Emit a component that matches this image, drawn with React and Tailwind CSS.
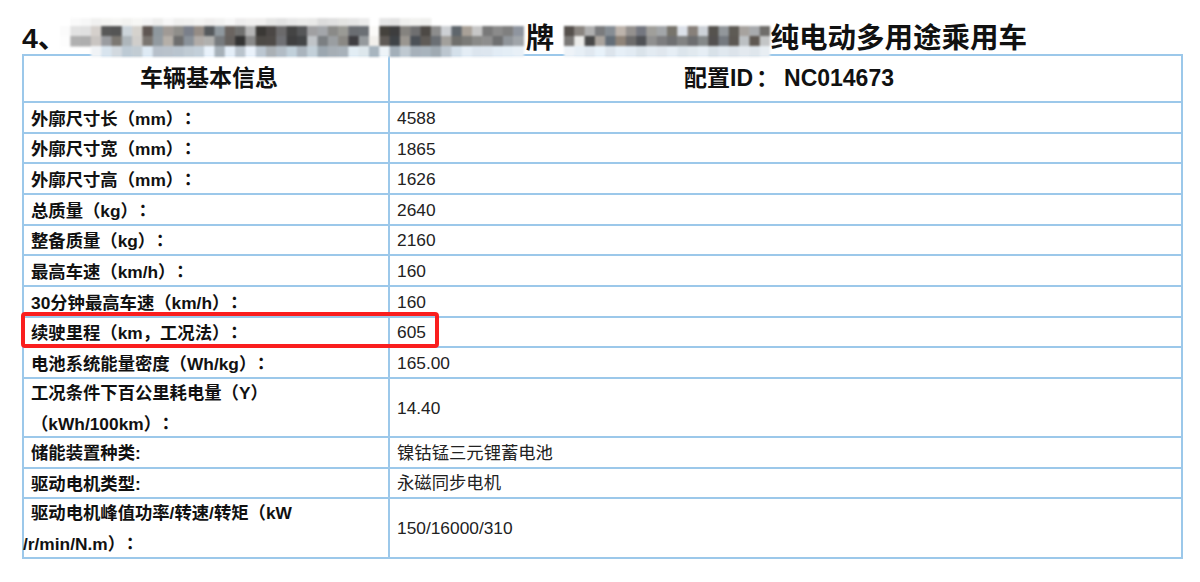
const mosaics = {
  a: {
    cell: 10.3,
    rows: [
      ["#ffffff","#fafafa","#f7f7f7","#f1f1f0","#f4f4f2","#f7f7f5","#f3f3f1","#f7f7f5","#f4f4f4","#eeeeed","#f7f7f7","#f0f0ef","#f1f1f0","#f4f4f3","#f0efee","#f2f2f1","#f7f7f7","#eeeded","#f1f0ef","#f0efee","#e6e6e5","#e2e2e2","#e8e8e8","#ebebea","#e9e9e8","#dcdcdc","#e0e0e0","#e4e4e2","#e6e6e6","#ececec","#ffffff","#e6e6e6","#e3e3e3","#f0f0ee","#f2f2f0","#f0f0ee","#ffffff","#ffffff","#ffffff","#ffffff","#ffffff","#ffffff","#ffffff","#ffffff","#ffffff"],
      ["#fbfbfb","#e2e2e2","#e0e0e0","#d5d0cc","#585858","#555555","#ccd4da","#d5d2cd","#5f5652","#8f989e","#a09a95","#8f8e8a","#7a7f8a","#958c85","#55595c","#8f989e","#6a6460","#70706f","#b5b5b5","#3a3835","#4b4745","#6b6a6b","#444444","#555658","#a0a0a2","#a3a6aa","#8a8a88","#9a9a95","#6a6d72","#6b7075","#fbfaf8","#45423d","#3d3d3e","#85837f","#6f6f70","#4d4945","#8d8d8d","#cdd0d4","#5f666c","#a9a198","#c7c7c7","#797979","#8b8b8b","#7f7f7f","#8f959f"],
      ["#fdfdfd","#b0b0b0","#aeaeae","#c9c5c2","#9a9ca0","#7c7872","#aeb6bb","#d0cecb","#7a7570","#929aa0","#b5afa8","#6e6e6e","#8a929a","#b0aba7","#b0b0ae","#777b7e","#66625f","#343434","#8a8a8a","#4d4a46","#4f4b48","#6f7074","#3f3f40","#434547","#c0c4c8","#7b7f82","#9a9ea1","#8a8884","#3f3e42","#959a9d","#f2f0ec","#5f5a56","#3f4347","#9a9690","#4c5157","#5f5b57","#6b6f74","#a2a09c","#6f6f6c","#7b7b78","#8a8a88","#8e8e8e","#6f7071","#90959a","#a0a5aa"],
      ["#ffffff","#ffffff","#ffffff","#f0f3f6","#d8e4ee","#d2d9df","#bdcad4","#c2ccd3","#deeaf4","#b7c0ca","#b9c2cb","#b9c4ce","#c0cbd4","#c3cfd9","#e9f2fb","#a6b0b8","#e4eef8","#b9c3cc","#eaf2fb","#bcc7d1","#aab0b5","#b2bcc5","#c1d0da","#aab4bd","#c3d0d9","#9ca7b0","#a6aeb5","#a8b1b9","#e2edf4","#dde7ec","#a8b5bf","#eef4f8","#a3afb9","#bfc9d1","#a7b1ba","#a9b4bd","#a0aab2","#bcc6cf","#d4e0ea","#e4edf5","#dce5ee","#dde6ef","#e2ecf5","#e4eef6","#e8f0f7"]
    ]
  },
  b: {
    cell: 10.3,
    rows: [
      ["#ffffff","#ffffff","#ffffff","#ffffff","#ffffff","#ffffff","#ffffff","#ffffff","#ffffff","#ffffff","#ffffff","#ffffff","#ffffff","#ffffff","#ffffff","#ffffff","#ffffff","#ffffff","#ffffff","#ffffff"],
      ["#55504c","#8a8580","#b0b0b0","#7a7b7d","#868d94","#bdb4ac","#94918f","#747780","#a09f9b","#a3a6a9","#77746c","#dce1e9","#87807a","#cdd2d8","#55524e","#92979b","#5e5b55","#a7a39f","#a8aaad","#6f6d6a"],
      ["#7a7876","#ececea","#484848","#aaa49e","#646e78","#8f8479","#6d6c6c","#505256","#909090","#7d7d7f","#6f7072","#828383","#6d6e70","#85898a","#535050","#757a80","#5c5853","#bcc0c3","#5f5852","#c4c6c7"],
      ["#eef3f8","#e7eff6","#e0e8f0","#e8f2fa","#dce4ec","#e6eff7","#e2ebf3","#dae3ea","#e3ebf2","#e0e7ee","#e6eef5","#dce5ec","#e1e9ef","#e6eef5","#d8e1e8","#e0e8ef","#dce3ea","#e3e9ef","#dfe6ec","#e8eef3"]
    ]
  }
};

function Mosaic({ m, className }) {
  const width = m.rows[0].length * m.cell;
  return (
    <svg width={width} height={41} viewBox={`0 0 ${width} 41`} className={className}>
      {m.rows.map((row, r) =>
        row.map((c, i) =>
          c === "#ffffff" ? null : (
            <rect key={`${r}-${i}`} x={i * m.cell} y={[0, 8, 18, 28][r]} width={m.cell + 0.5} height={[8.5, 10.5, 10.5, 11][r]} fill={c} />
          )
        )
      )}
    </svg>
  );
}

const rows = [
  { h: "h-[28.67px]", l: "外廓尺寸长（mm）", c: "：", v: "4588" },
  { h: "h-[28.67px]", l: "外廓尺寸宽（mm）", c: "：", v: "1865" },
  { h: "h-[28.67px]", l: "外廓尺寸高（mm）", c: "：", v: "1626" },
  { h: "h-[28.67px]", l: "总质量（kg）", c: "：", v: "2640" },
  { h: "h-[28.67px]", l: "整备质量（kg）", c: "：", v: "2160" },
  { h: "h-[28.67px]", l: "最高车速（km/h）", c: "：", v: "160" },
  { h: "h-[28.67px]", l: "30分钟最高车速（km/h）", c: "：", v: "160" },
  { h: "h-[28.67px]", l: "续驶里程（km，工况法）", c: "：", v: "605" },
  { h: "h-[28.67px]", l: "电池系统能量密度（Wh/kg）", c: "：", v: "165.00" },
  { h: "h-[57px]", l: "工况条件下百公里耗电量（Y）", l2: "（kWh/100km）", c2: "：", v: "14.40" },
  { h: "h-[28.67px]", l: "储能装置种类:", v: "镍钴锰三元锂蓄电池" },
  { h: "h-[28.67px]", l: "驱动电机类型:", v: "永磁同步电机" },
  { h: "h-[57.4px]", l: "驱动电机峰值功率/转速/转矩（kW", l2: "/r/min/N.m）", c2: "：", flush: true, v: "150/16000/310" },
];

const Colon = ({ children }) =>
  children ? <span className="ml-[5px] font-['Noto_Sans_CJK_TC',sans-serif]">{children}</span> : null;

export default function App() {
  return (
    <div className="relative w-[1200px] h-[582px] overflow-hidden bg-white pl-[22px] font-['Liberation_Sans','Noto_Sans_CJK_SC',sans-serif] text-[#111]">
      <div className="relative z-10 flex h-[54px] items-end">
        <span className="text-[28.5px] font-bold leading-[32px]">4、</span>
        <Mosaic m={mosaics.a} className="mb-[-5px] ml-[-6px] blur-[1px]" />
        <span className="ml-[2px] text-[28.5px] font-bold leading-[32px]">牌</span>
        <Mosaic m={mosaics.b} className="mb-[-5px] ml-[10px] blur-[1px]" />
        <span className="text-[28.5px] font-bold leading-[32px]">纯电动多用途乘用车</span>
      </div>
      <div className="w-[1161px] border-2 border-b-0 border-[#9cc8ea]">
        <div className="flex h-[47px] border-b-2 border-[#9cc8ea]">
          <div className="flex w-[366px] shrink-0 items-center justify-center border-r-2 border-[#9cc8ea] pl-[6px] text-[23px] font-bold">车辆基本信息</div>
          <div className="flex flex-1 items-center justify-center pl-[7px] text-[23px] font-bold">
            <div>
              配置ID<span className="ml-[3px]">：</span>
              <span className="ml-[5px]">NC014673</span>
            </div>
          </div>
        </div>
        {rows.map((r) => (
          <div key={r.l} className={`flex ${r.h} box-content border-b-2 border-[#9cc8ea]`}>
            <div className="flex w-[366px] shrink-0 flex-col justify-center border-r-2 border-[#9cc8ea] pt-[2px] text-[17.33px] font-bold leading-[30px]">
              <div className="whitespace-nowrap pl-[7px]">
                {r.l}
                <Colon>{r.c}</Colon>
              </div>
              {r.l2 && (
                <div className={r.flush ? "-ml-[1px] whitespace-nowrap" : "whitespace-nowrap pl-[7px]"}>
                  {r.l2}
                  <Colon>{r.c2}</Colon>
                </div>
              )}
            </div>
            <div className="flex flex-1 items-center pl-[7px] pt-[3px] text-[17.33px] text-[#222]">{r.v}</div>
          </div>
        ))}
      </div>
      <div className="absolute left-[21px] top-[312px] h-[36px] w-[418px] rounded-[4px] border-4 border-[#fa1e1e]" />
    </div>
  );
}
